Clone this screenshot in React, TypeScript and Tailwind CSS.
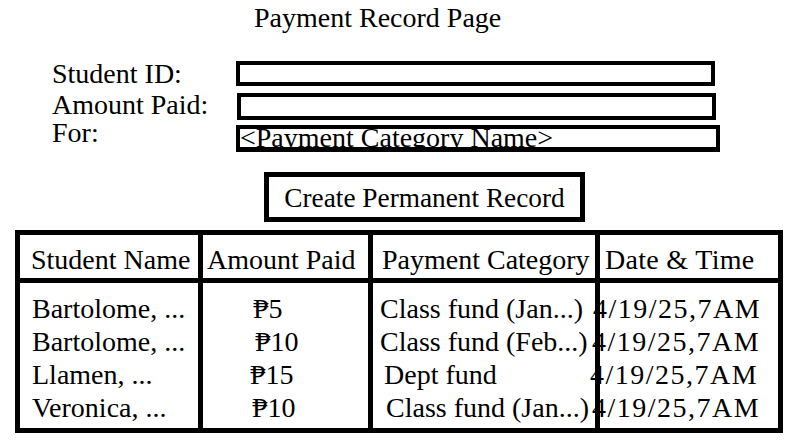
import React from "react";

const rows = [
  { name: "Bartolome, ...", amt: "₱5", amtPl: "pl-[50px]", cat: "Class fund (Jan...)", catPl: "pl-[7px]", datePl: "-ml-[7px]" },
  { name: "Bartolome, ...", amt: "₱10", amtPl: "pl-[52px]", cat: "Class fund (Feb...)", catPl: "pl-[7px]", datePl: "-ml-[8px]" },
  { name: "Llamen, ...", amt: "₱15", amtPl: "pl-[47px]", cat: "Dept fund", catPl: "pl-[11px]", datePl: "-ml-[10px]" },
  { name: "Veronica, ...", amt: "₱10", amtPl: "pl-[49px]", cat: "Class fund (Jan...)", catPl: "pl-[13px]", datePl: "-ml-[8px]" },
];

export default function App() {
  return (
    <div className="w-[799px] h-[448px] bg-white text-black overflow-hidden font-['Liberation_Serif','Times_New_Roman',Times,serif]">
      <h1 className="pl-[254px] pt-[2px] text-[28px] leading-[32px] font-normal">Payment Record Page</h1>

      <div className="mt-[27px] pl-[52px] flex flex-col">
        <div className="flex items-center h-[25px]">
          <div className="w-[184px] text-[28px] leading-[28px] whitespace-nowrap">Student ID:</div>
          <div className="w-[479px] h-[25px] border-[4px] border-black" />
        </div>
        <div className="flex items-center h-[27px] mt-[7px]">
          <div className="w-[185px] text-[28px] leading-[28px] whitespace-nowrap -mt-[4px]">Amount Paid:</div>
          <div className="w-[479px] h-[27px] border-[4px] border-black" />
        </div>
        <div className="flex items-center h-[27px] mt-[5px]">
          <div className="w-[184px] text-[28px] leading-[28px] whitespace-nowrap -mt-[12px]">For:</div>
          <div className="w-[484px] h-[27px] border-[4px] border-b-[5px] border-black overflow-hidden">
            <div className="text-[28px] leading-[18px] whitespace-nowrap">&lt;Payment Category Name&gt;</div>
          </div>
        </div>
      </div>

      <div className="mt-[20px] ml-[264px] w-[321px] h-[50px] border-[5px] border-black flex items-center justify-center pt-[2px]">
        <span className="text-[27.3px] leading-[30px] whitespace-nowrap">Create Permanent Record</span>
      </div>

      <div className="mt-[8px] ml-[15px] w-[768px] h-[203px] border-[5px] border-black flex flex-col text-[28px]">
        <div className="flex h-[48px] border-b-[5px] border-black leading-[40px] whitespace-nowrap">
          <div className="w-[183px] border-r-[5px] border-black pl-[11px] pt-[5px]">Student Name</div>
          <div className="w-[170px] border-r-[5px] border-black pl-[4px] pt-[5px]">Amount Paid</div>
          <div className="w-[227px] border-r-[5px] border-black pl-[9px] pt-[5px]">Payment Category</div>
          <div className="w-[178px] pl-[5px] pt-[5px] tracking-[0.3px]">Date &amp; Time</div>
        </div>
        <div className="flex flex-1 whitespace-nowrap leading-[33px]">
          <div className="w-[183px] border-r-[5px] border-black pt-[9px]">
            {rows.map((r, i) => (
              <div key={i} className="h-[33px] pl-[12px]">{r.name}</div>
            ))}
          </div>
          <div className="w-[170px] border-r-[5px] border-black pt-[9px]">
            {rows.map((r, i) => (
              <div key={i} className={`h-[33px] ${r.amtPl}`}>{r.amt}</div>
            ))}
          </div>
          <div className="relative z-10 w-[227px] border-r-[5px] border-black pt-[9px]">
            {rows.map((r, i) => (
              <div key={i} className={`h-[33px] ${r.catPl}`}>{r.cat}</div>
            ))}
          </div>
          <div className="w-[178px] pt-[9px]">
            {rows.map((r, i) => (
              <div key={i} className={`h-[33px] tracking-[1.5px] ${r.datePl}`}>4/19/25,7AM</div>
            ))}
          </div>
        </div>
      </div>
    </div>
  );
}
